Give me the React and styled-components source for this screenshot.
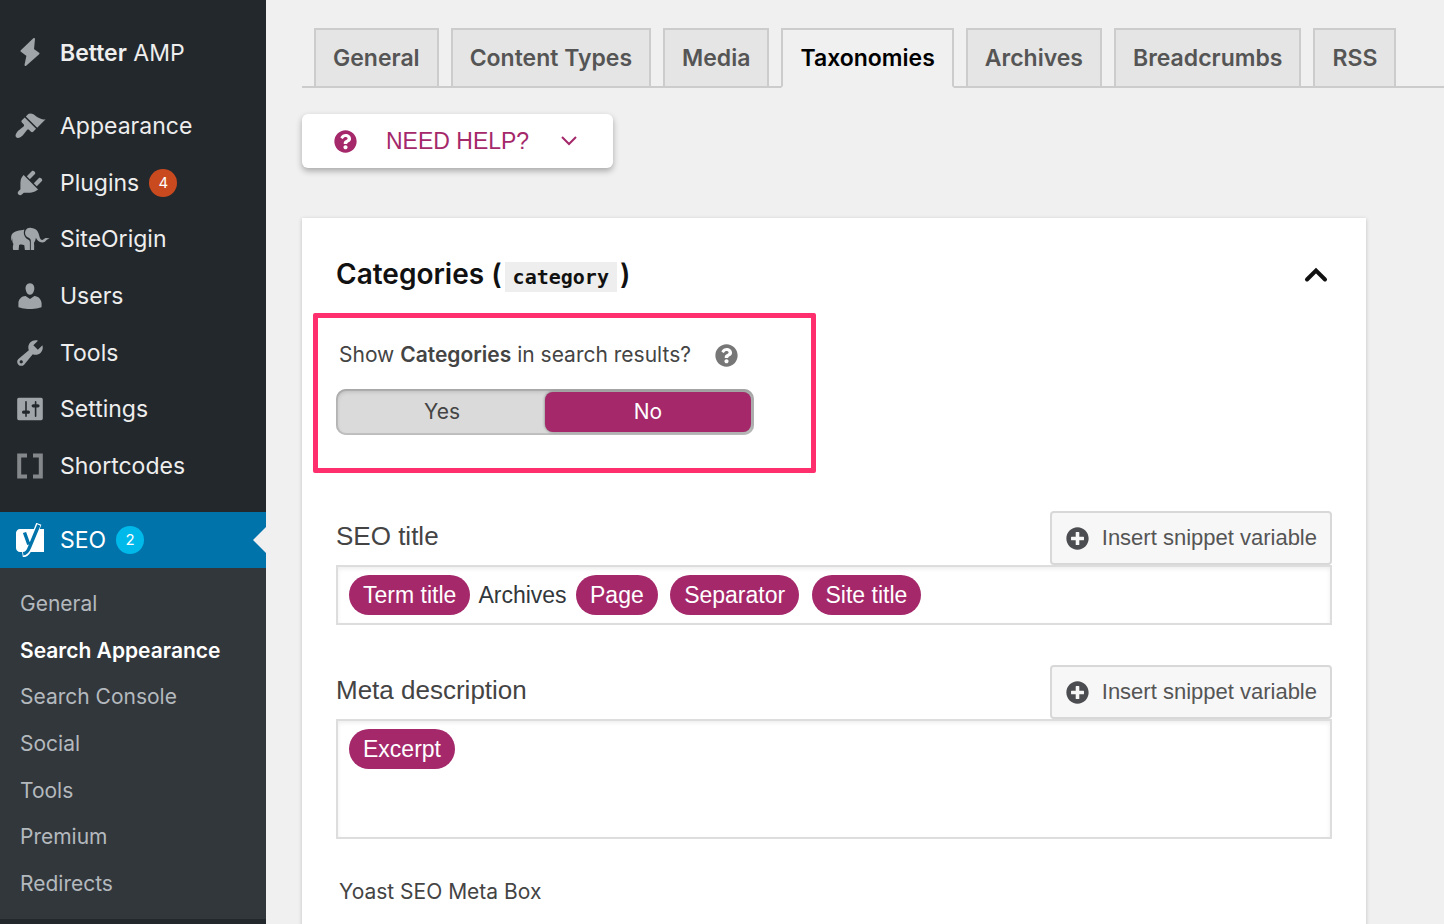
import { useState } from "react";
import styled, { createGlobalStyle, css } from "styled-components";
import { FaQuestionCircle, FaPlusCircle } from "react-icons/fa";

const purple = "#a4286a";
const ui = `Inter, "Liberation Sans", sans-serif`;
const arial = `"Liberation Sans", Arial, sans-serif`;

const paths = {
    appearance: "M14.48 11.06L7.41 3.99l1.5-1.5c.5-.56 2.3-.47 3.51.32 1.21.8 1.43 1.28 2.91 2.1 1.18.64 2.45 1.26 4.45.85zm-.71.71L6.7 4.7 4.93 6.47c-.39.39-.39 1.02 0 1.41l1.06 1.06c.39.39.39 1.03 0 1.42-.6.6-1.43 1.11-2.21 1.69-.35.26-.7.53-1.01.84C1.43 14.23.4 16.08 1.4 17.07c.99 1 2.84-.03 4.18-1.36.31-.31.58-.66.85-1.02.57-.78 1.08-1.61 1.69-2.21.39-.39 1.02-.39 1.41 0l1.06 1.06c.39.39 1.02.39 1.41 0z",
    plugins: "M13.11 4.36L9.87 7.6 8 5.73l3.24-3.24c.35-.34 1.05-.2 1.56.32.52.51.66 1.21.31 1.55zm-8 1.77l.91-1.12 9.01 9.01-1.19.84c-.71.71-2.63 1.16-3.82 1.16H6.14L4.9 17.26c-.59.59-1.54.59-2.12 0-.59-.58-.59-1.53 0-2.12l1.24-1.24v-3.88c0-1.13.4-3.19 1.09-3.89zm7.26 3.97l3.24-3.24c.34-.35 1.04-.21 1.55.31.52.51.66 1.21.31 1.55l-3.24 3.25z",
    users: "M10 9.25c-2.27 0-2.73-3.44-2.73-3.44C7 4.02 7.82 2 9.97 2c2.16 0 2.98 2.02 2.71 3.81 0 0-.41 3.44-2.68 3.44zm0 2.57L12.72 10c2.39 0 4.52 2.33 4.52 4.53v2.49s-3.65 1.13-7.24 1.13c-3.65 0-7.24-1.13-7.24-1.13v-2.49c0-2.25 1.94-4.48 4.47-4.48z",
    tools: "M16.68 9.77c-1.34 1.34-3.3 1.67-4.95.99l-5.41 6.52c-.99.99-2.59.99-3.58 0s-.99-2.59 0-3.57l6.52-5.42c-.68-1.65-.35-3.61.99-4.95 1.28-1.28 3.12-1.62 4.72-1.06l-2.89 2.89 2.82 2.82 2.86-2.87c.53 1.58.18 3.39-1.08 4.65zM3.81 16.21c.4.39 1.04.39 1.43 0 .4-.4.4-1.04 0-1.43-.39-.4-1.03-.4-1.43 0-.39.39-.39 1.03 0 1.43z",
    settings: "M18 16V4c0-.55-.45-1-1-1H3c-.55 0-1 .45-1 1v12c0 .55.45 1 1 1h14c.55 0 1-.45 1-1zM8 11h1c.55 0 1 .45 1 1s-.45 1-1 1H8v1.5c0 .28-.22.5-.5.5s-.5-.22-.5-.5V13H6c-.55 0-1-.45-1-1s.45-1 1-1h1V5.5c0-.28.22-.5.5-.5s.5.22.5.5V11zm5-2h-1c-.55 0-1-.45-1-1s.45-1 1-1h1V5.5c0-.28.22-.5.5-.5s.5.22.5.5V7h1c.55 0 1 .45 1 1s-.45 1-1 1h-1v5.5c0 .28-.22.5-.5.5s-.5-.22-.5-.5V9z",
};

const DashIcon = ({ name }) => (
    <svg width="32" height="32" viewBox="0 0 20 20" fill="currentColor" aria-hidden="true">
        <path d={paths[name]}/>
    </svg>
);

const BoltIcon = () => (
    <svg width="20" height="32" viewBox="0 0 20 32" fill="currentColor" stroke="currentColor" strokeWidth="2" strokeLinejoin="round" aria-hidden="true">
        <path d="M14 2L1.500 14l6 4.500L5.500 28 18.500 16.500 13 12.500z"/>
    </svg>
);

const ShortcodeIcon = () => (
    <svg width="26" height="26" viewBox="0 0 26 26" fill="none" stroke="#85888b" strokeWidth="4" aria-hidden="true">
        <path d="M10 2.5H2.2v21H10M16 2.5h7.8v21H16"/>
    </svg>
);

const ElephantIcon = () => (
    <svg width="40" height="24" viewBox="0 0 40 24" fill="currentColor" aria-hidden="true">
        <path d="M1.2 9.500C1.6 5.900 5.600 3.600 10.800 3.200c1.400-.1 2.500-.2 3.600-.7-1.500 4 .1 8.300 3.600 9.900 1.200.5 1.900 1.400 1.900 2.900V23h-5l-.6-4.800c-1.700-.8-3.800-.8-5.200-.2L8.600 23H3.200c-.6-2-.4-4 .2-6-1.200-2.300-1.400-4.300-.8-6.300-.5.900-.6 2.200-.7 3.200-.7-.9-.9-2.900-.7-4.400z"/>
        <path d="M15.600 3.200C17 1 19.300.300 21.500 1c4.200.300 6.700 3.100 7.500 6.700.5 2.600 1.300 4.900 3.100 5.200 1.500.200 2-1.400 3.500-1.800 1.200-.3 2.700-.1 4 .6-1.300.3-2.600.6-3.300 1.500-1.200 1.500-2.400 2.300-4.200 2.200-3 0-5.100-2.100-6.200-4.700-.3 2.200-1.100 3.800-1.900 5.100.200 2.300.300 4.700.1 7.200h-3.300v-9.200c0-1.800-1.300-2.600-2.700-3.200-2.700-1.300-3.800-4.400-2.500-7.400z"/>
    </svg>
);

const YoastLogo = () => (
    <svg width="28" height="34" viewBox="0 0 28 34" fill="none" aria-hidden="true">
        <path d="M4 6h24v23H4c-2.200 0-4-1.800-4-4V10c0-2.200 1.800-4 4-4z" fill="#fff"/>
        <path d="M22.800.8L13.500 25c-1.400 4-3 6.200-7 6.800" stroke="#fff" strokeWidth="5.500"/>
        <path d="M8.500 9.500l4.300 12M22.800 2L13.200 25c-1.300 3.500-2.800 5.300-6 5.800" stroke="#0073aa" strokeWidth="3.400"/>
    </svg>
);

const menu = [
    { label: "Appearance", icon: <DashIcon name="appearance"/> },
    { label: "Plugins", icon: <DashIcon name="plugins"/>, count: 4 },
    { label: "SiteOrigin", icon: <ElephantIcon/> },
    { label: "Users", icon: <DashIcon name="users"/> },
    { label: "Tools", icon: <DashIcon name="tools"/> },
    { label: "Settings", icon: <DashIcon name="settings"/> },
    { label: "Shortcodes", icon: <ShortcodeIcon/> },
];

const submenu = ["General", "Search Appearance", "Search Console", "Social", "Tools", "Premium", "Redirects"];
const tabs = ["General", "Content Types", "Media", "Taxonomies", "Archives", "Breadcrumbs", "RSS"];

const SnippetField = ({ id, label, tall, children }) => (
    <FieldGroup>
        <FieldHead>
            <FieldLabel id={id}>{label}</FieldLabel>
            <InsertButton type="button"><FaPlusCircle size={23}/>Insert snippet variable</InsertButton>
        </FieldHead>
        <Editor role="textbox" aria-labelledby={id} contentEditable suppressContentEditableWarning $tall={tall}>
            {children}
        </Editor>
    </FieldGroup>
);

const App = () => {
    const [visible, setVisible] = useState("No");

    return (
        <Page>
            <GlobalStyle/>
            <Sidebar>
                <MenuLink href="#amp">
                    <IconBox><BoltIcon/></IconBox>
                    <span><b>Better</b> AMP</span>
                </MenuLink>
                <Menu>
                    {menu.map(item =>
                        <MenuLink key={item.label} href={`#${item.label}`}>
                            <IconBox>{item.icon}</IconBox>
                            {item.label}
                            {item.count && <Badge $color="#ca4a1f">{item.count}</Badge>}
                        </MenuLink>)}
                </Menu>
                <MenuLink href="#seo" $active>
                    <IconBox><YoastLogo/></IconBox>
                    SEO
                    <Badge $color="#00b9eb">2</Badge>
                </MenuLink>
                <Submenu>
                    {submenu.map(item =>
                        <SubmenuLink key={item} href={`#seo-${item}`} $current={item === "Search Appearance"}>
                            {item}
                        </SubmenuLink>)}
                </Submenu>
            </Sidebar>

            <Content>
                <Tabs>
                    {tabs.map(tab =>
                        <Tab key={tab} href={`#tab-${tab}`} $active={tab === "Taxonomies"}>{tab}</Tab>)}
                </Tabs>

                <HelpButton type="button">
                    <FaQuestionCircle size={23}/>
                    <span>NEED HELP?</span>
                    <svg width="16" height="10" viewBox="0 0 16 10" fill="none" stroke="currentColor" strokeWidth="2" aria-hidden="true">
                        <path d="M1 1l7 7 7-7"/>
                    </svg>
                </HelpButton>

                <Card>
                    <CardHead>
                        <h2>Categories (<code>category</code>)</h2>
                        <CollapseButton type="button" aria-label="Collapse Categories">
                            <svg width="24" height="16" viewBox="0 0 24 16" fill="none" stroke="currentColor" strokeWidth="4" strokeLinecap="round" aria-hidden="true">
                                <path d="M3 12.500L12 3.500l9 9"/>
                            </svg>
                        </CollapseButton>
                    </CardHead>

                    <Highlight role="radiogroup" aria-labelledby="show-categories">
                        <Question>
                            <span id="show-categories">Show <b>Categories</b> in search results?</span>
                            <HintButton type="button" aria-label="Help"><FaQuestionCircle size={23}/></HintButton>
                        </Question>
                        <Switch>
                            {["Yes", "No"].map(option =>
                                <Option key={option} $checked={visible === option}>
                                    <input
                                        type="radio"
                                        name="show"
                                        checked={visible === option}
                                        onChange={() => setVisible(option)}
                                    />
                                    {option}
                                </Option>)}
                        </Switch>
                    </Highlight>

                    <SnippetField id="seo-title" label="SEO title">
                        <Pill>Term title</Pill> Archives <Pill>Page</Pill> <Pill>Separator</Pill> <Pill>Site title</Pill>
                    </SnippetField>
                    <SnippetField id="meta-description" label="Meta description" tall>
                        <Pill>Excerpt</Pill>
                    </SnippetField>

                    <MetaBox>Yoast SEO Meta Box</MetaBox>
                </Card>
            </Content>
        </Page>
    );
};

const GlobalStyle = createGlobalStyle`
  * {
    box-sizing: border-box;
  }

  body {
    margin: 0;
    background: #f0f0f0;
    font-family: ${ui};
    color: #444;
  }

  a {
    text-decoration: none;
  }

  button {
    cursor: pointer;
  }

  b {
    font-weight: 600;
  }
`

const Page = styled.div`
  display: flex;
  height: 100vh;
  overflow: hidden;
`

const Sidebar = styled.nav`
  flex: 0 0 266px;
  padding-top: 25px;
  background: #23282d;
`

const Menu = styled.div`
  display: grid;
  grid-auto-rows: 1fr;
  min-height: 396px;
  margin: 17px 0 18px;
`

const MenuLink = styled.a`
  display: flex;
  align-items: center;
  position: relative;
  min-height: 56px;
  font-size: 23px;
  color: #eee;

  ${({ $active }) => $active && css`
    background: #0073aa;
    color: #fff;

    &::after {
      content: "";
      position: absolute;
      right: 0;
      border: 13px solid transparent;
      border-left: 0;
      border-right-color: #f0f0f0;
    }
  `}
`

const IconBox = styled.span`
  display: flex;
  justify-content: center;
  flex: 0 0 60px;
  color: #a0a5aa;
`

const Badge = styled.span`
  width: 28px;
  margin-left: 10px;
  border-radius: 14px;
  background: ${({ $color }) => $color};
  color: #fff;
  font-size: 15px;
  line-height: 28px;
  text-align: center;
`

const Submenu = styled.div`
  display: grid;
  grid-auto-rows: 1fr;
  align-items: center;
  min-height: 351px;
  padding: 12px 0;
  background: #32373c;
`

const SubmenuLink = styled.a`
  padding-left: 20px;
  font-size: 21px;
  font-weight: ${({ $current }) => $current ? 600 : 400};
  color: ${({ $current }) => $current ? "#fff" : "#b4b9be"};
`

const Content = styled.main`
  flex: 1;
  min-width: 0;
  padding: 28px 0 0 36px;
`

const Tabs = styled.div`
  display: flex;
  gap: 12px;
  padding-left: 12px;
  border-bottom: 2px solid #ccc;
`

const Tab = styled.a`
  margin-bottom: -2px;
  padding: 0 17px;
  border: 2px solid #ccc;
  background: #e5e5e5;
  color: #555;
  font-size: 23px;
  font-weight: 600;
  line-height: 56px;
  white-space: nowrap;

  ${({ $active }) => $active && css`
    border-bottom-color: #f0f0f0;
    background: #f0f0f0;
    color: #000;
  `}
`

const HelpButton = styled.button`
  display: flex;
  align-items: center;
  height: 54px;
  margin-top: 26px;
  padding: 0 36px 0 32px;
  border: 0;
  border-radius: 6px;
  background: #fff;
  box-shadow: 0 3px 6px rgba(0, 0, 0, .3);
  color: ${purple};
  font-family: ${arial};
  font-size: 23px;

  span {
    margin: 0 32px 0 29px;
  }
`

const Card = styled.section`
  margin: 50px 78px 0 0;
  padding: 36px 34px;
  background: #fff;
  box-shadow: 0 1px 4px rgba(0, 0, 0, .2);
`

const CardHead = styled.div`
  display: flex;
  align-items: center;
  justify-content: space-between;
  height: 42px;

  h2 {
    margin: 0;
    color: #111;
    font-size: 28px;
    font-weight: 600;
    line-height: 42px;
  }

  code {
    margin: 0 3px;
    padding: 3px 8px;
    background: #eee;
    font-family: "DejaVu Sans Mono", monospace;
    font-size: 20px;
  }
`

const CollapseButton = styled.button`
  display: flex;
  padding: 4px;
  border: 0;
  background: none;
  color: #111;
`

const Highlight = styled.div`
  width: 503px;
  height: 160px;
  margin: 17px 0 38px -23px;
  padding: 24px 0 0 18px;
  border: 5px solid #ff2e6c;
  border-radius: 2px;
`

const Question = styled.div`
  display: flex;
  align-items: center;
  gap: 24px;
  padding-left: 3px;
  color: #444;
  font-size: 21px;
  line-height: 26px;
`

const HintButton = styled.button`
  display: flex;
  padding: 0;
  border: 0;
  background: none;
  color: #777;
`

const Switch = styled.div`
  display: grid;
  grid-template-columns: 1fr 1fr;
  width: 418px;
  height: 46px;
  margin-top: 21px;
  padding: 3px;
  border-radius: 10px;
  background: #dadada;
  box-shadow: inset 0 2px 5px rgba(0, 0, 0, .2), inset 0 0 0 2px #c4c4c4;
`

const Option = styled.label`
  position: relative;
  border-radius: 8px;
  font-size: 21px;
  line-height: 40px;
  text-align: center;
  cursor: pointer;

  ${({ $checked }) => $checked && css`
    background: ${purple};
    box-shadow: 0 0 3px rgba(0, 0, 0, .5);
    color: #fff;
  `}

  input {
    position: absolute;
    inset: 0;
    margin: 0;
    opacity: 0;
  }
`

const FieldGroup = styled.div`
  margin-bottom: 40px;
  font-family: ${arial};
`

const FieldHead = styled.div`
  display: flex;
  align-items: flex-start;
  justify-content: space-between;
`

const FieldLabel = styled.span`
  font-size: 26px;
  line-height: 50px;
`

const InsertButton = styled.button`
  display: flex;
  align-items: center;
  gap: 13px;
  height: 54px;
  padding: 0 13px 0 14px;
  border: 2px solid #d8d8d8;
  border-radius: 4px;
  background: #f7f7f7;
  color: #555;
  font-family: ${arial};
  font-size: 22px;

  svg {
    color: #4c4d50;
  }
`

const Editor = styled.div`
  min-height: ${({ $tall }) => $tall ? 120 : 60}px;
  padding: 8px;
  border: 2px solid #ddd;
  box-shadow: inset 0 2px 4px rgba(0, 0, 0, .07);
  color: #32373c;
  font-size: 23px;
  line-height: 40px;
`

const Pill = styled.span`
  display: inline-block;
  margin: 0 3px;
  padding: 0 14px;
  border-radius: 20px;
  background: ${purple};
  color: #fff;
`

const MetaBox = styled.p`
  margin: 0 0 0 3px;
  font-size: 21px;
  line-height: 26px;
`

export default App;
